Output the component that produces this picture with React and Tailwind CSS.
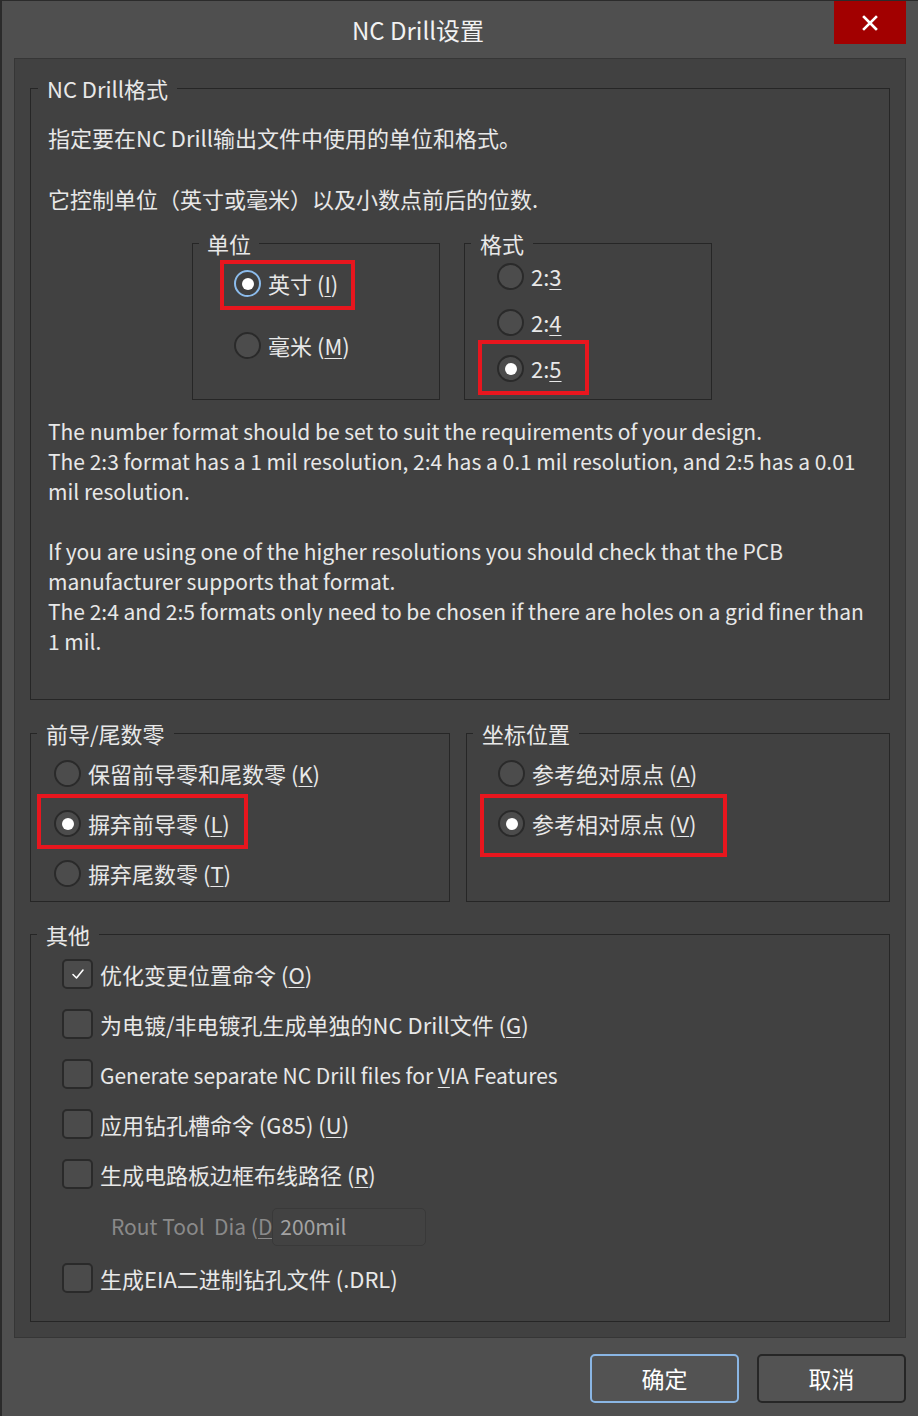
import React from 'react';

function U({ children }) {
  return <span className="underline decoration-1 underline-offset-[3px]">{children}</span>;
}

function Radio({ checked, focus, mark, children }) {
  return (
    <div className="relative flex h-[27px] items-center gap-[7px]">
      <span
        className={`flex h-[27px] w-[27px] shrink-0 items-center justify-center rounded-full border-2 ${
          focus ? 'border-[#8cbcec] bg-[#3f3f3f]' : 'border-[#2a2a2a] bg-[#4c4c4c]'
        }`}
      >
        {checked && <span className="h-[12px] w-[12px] rounded-full bg-white" />}
      </span>
      <span className="whitespace-nowrap leading-[27px]">{children}</span>
      {mark && <span className={`pointer-events-none absolute border-4 border-[#e8161e] ${mark}`} />}
    </div>
  );
}

function Check({ checked, children }) {
  return (
    <div className="flex h-[30px] items-center gap-[7px]">
      <span className="flex h-[30px] w-[31px] shrink-0 items-center justify-center rounded-[5px] border-2 border-[#2a2a2a] bg-[#4b4b4b]">
        {checked && (
          <svg width="18" height="18" viewBox="0 0 18 18" fill="none">
            <polyline points="4,9.5 7.5,13 14,5" stroke="#ffffff" strokeWidth="1.6" strokeLinecap="round" strokeLinejoin="round" />
          </svg>
        )}
      </span>
      <span className="whitespace-nowrap leading-[30px]">{children}</span>
    </div>
  );
}

export default function App() {
  return (
    <div className="h-[1416px] w-[918px] overflow-hidden border-l-2 border-t border-[#2b2b2b] bg-[#4f4f4f] font-['Noto_Sans_CJK_SC','Noto_Sans',sans-serif] text-[22px] text-[#e8e8e8]">
      {/* title bar */}
      <div className="flex h-[57px]">
        <div className="flex flex-1 justify-center pt-[13px]">
          <span className="text-[24px] leading-[32px] text-[#f2f2f2]">NC Drill设置</span>
        </div>
        <button type="button" className="mr-[12px] flex h-[43px] w-[72px] items-center justify-center bg-[#a20000]">
          <svg width="16" height="16" viewBox="0 0 16 16">
            <path d="M2 2 L14 14 M14 2 L2 14" stroke="#ffffff" strokeWidth="2.6" strokeLinecap="square" />
          </svg>
        </button>
      </div>

      {/* panel */}
      <div className="ml-[12px] h-[1280px] w-[892px] border border-[#363636] bg-[#414141] pl-[15px] pt-[17px]">
        <fieldset className="w-[860px] min-w-0 border border-[#262626] pb-[43px]">
          <legend className="ml-[7px] px-[9px] leading-[24px]">NC Drill格式</legend>
          <div className="pl-[17px] pt-[22px]">
            <p className="leading-[30px]">指定要在NC Drill输出文件中使用的单位和格式。</p>
            <p className="mt-[31px] leading-[30px]">它控制单位（英寸或毫米）以及小数点前后的位数.</p>

            <div className="ml-[144px] mt-[18px] flex gap-[24px]">
              <fieldset className="h-[169px] w-[248px] min-w-0 border border-[#262626]">
                <legend className="ml-[6px] px-[8px] leading-[24px]">单位</legend>
                <div className="flex flex-col gap-[35px] pl-[41px] pt-[15px]">
                  <Radio checked focus mark="left-[-14px] top-[-10px] h-[50px] w-[135px]">
                    英寸 (<U>I</U>)
                  </Radio>
                  <Radio>
                    毫米 (<U>M</U>)
                  </Radio>
                </div>
              </fieldset>
              <fieldset className="h-[169px] w-[248px] min-w-0 border border-[#262626]">
                <legend className="ml-[6px] px-[9px] leading-[24px]">格式</legend>
                <div className="flex flex-col gap-[19px] pl-[32px] pt-[8px]">
                  <Radio>
                    2:<U>3</U>
                  </Radio>
                  <Radio>
                    2:<U>4</U>
                  </Radio>
                  <Radio checked mark="left-[-19px] top-[-15px] h-[55px] w-[111px]">
                    2:<U>5</U>
                  </Radio>
                </div>
              </fieldset>
            </div>

            <div className="mt-[16px] whitespace-nowrap text-[21px] leading-[30px]">
              <p>The number format should be set to suit the requirements of your design.</p>
              <p>The 2:3 format has a 1 mil resolution, 2:4 has a 0.1 mil resolution, and 2:5 has a 0.01</p>
              <p>mil resolution.</p>
              <p className="mt-[30px]">If you are using one of the higher resolutions you should check that the PCB</p>
              <p>manufacturer supports that format.</p>
              <p>The 2:4 and 2:5 formats only need to be chosen if there are holes on a grid finer than</p>
              <p>1 mil.</p>
            </div>
          </div>
        </fieldset>

        <div className="mt-[21px] flex gap-[16px]">
          <fieldset className="h-[181px] w-[420px] min-w-0 border border-[#262626]">
            <legend className="ml-[6px] px-[9px] leading-[24px]">前导/尾数零</legend>
            <div className="flex flex-col gap-[23px] pl-[23px] pt-[15px]">
              <Radio>
                保留前导零和尾数零 (<U>K</U>)
              </Radio>
              <Radio checked mark="left-[-17px] top-[-16px] h-[55px] w-[211px]">
                摒弃前导零 (<U>L</U>)
              </Radio>
              <Radio>
                摒弃尾数零 (<U>T</U>)
              </Radio>
            </div>
          </fieldset>
          <fieldset className="h-[181px] w-[424px] min-w-0 border border-[#262626]">
            <legend className="ml-[6px] px-[9px] leading-[24px]">坐标位置</legend>
            <div className="flex flex-col gap-[23px] pl-[31px] pt-[15px]">
              <Radio>
                参考绝对原点 (<U>A</U>)
              </Radio>
              <Radio checked mark="left-[-18px] top-[-16px] h-[63px] w-[247px]">
                参考相对原点 (<U>V</U>)
              </Radio>
            </div>
          </fieldset>
        </div>

        <fieldset className="mt-[20px] h-[400px] w-[860px] min-w-0 border border-[#262626]">
          <legend className="ml-[6px] px-[9px] leading-[24px]">其他</legend>
          <div className="flex flex-col pl-[31px] pt-[13px]">
            <div className="flex flex-col gap-[20px]">
              <Check checked>
                优化变更位置命令 (<U>O</U>)
              </Check>
              <Check>
                为电镀/非电镀孔生成单独的NC Drill文件 (<U>G</U>)
              </Check>
              <Check>
                <span className="text-[21px]">
                  Generate separate NC Drill files for <U>V</U>IA Features
                </span>
              </Check>
              <Check>
                应用钻孔槽命令 (G85) (<U>U</U>)
              </Check>
              <Check>
                生成电路板边框布线路径 (<U>R</U>)
              </Check>
            </div>
            <div className="mt-[19px] flex h-[38px] items-center">
              <span className="ml-[49px] whitespace-pre text-[21px] text-[#8a8a8a]">
                Rout Tool  Dia (<U>D</U>
              </span>
              <span className="flex h-[38px] w-[154px] items-center rounded-[5px] border border-[#393939] bg-[#424242] pl-[7px] text-[21px] text-[#a3a3a3]">
                200mil
              </span>
            </div>
            <div className="mt-[17px]">
              <Check>生成EIA二进制钻孔文件 (.DRL)</Check>
            </div>
          </div>
        </fieldset>
      </div>

      {/* buttons */}
      <div className="mt-[16px] flex w-[904px] justify-end gap-[18px]">
        <button type="button" className="h-[49px] w-[149px] rounded-[5px] border-2 border-[#8ab6e4] bg-[#535353] text-[23px] text-white">
          确定
        </button>
        <button type="button" className="h-[49px] w-[149px] rounded-[5px] border-2 border-[#262626] bg-[#535353] text-[23px] text-white">
          取消
        </button>
      </div>
    </div>
  );
}
